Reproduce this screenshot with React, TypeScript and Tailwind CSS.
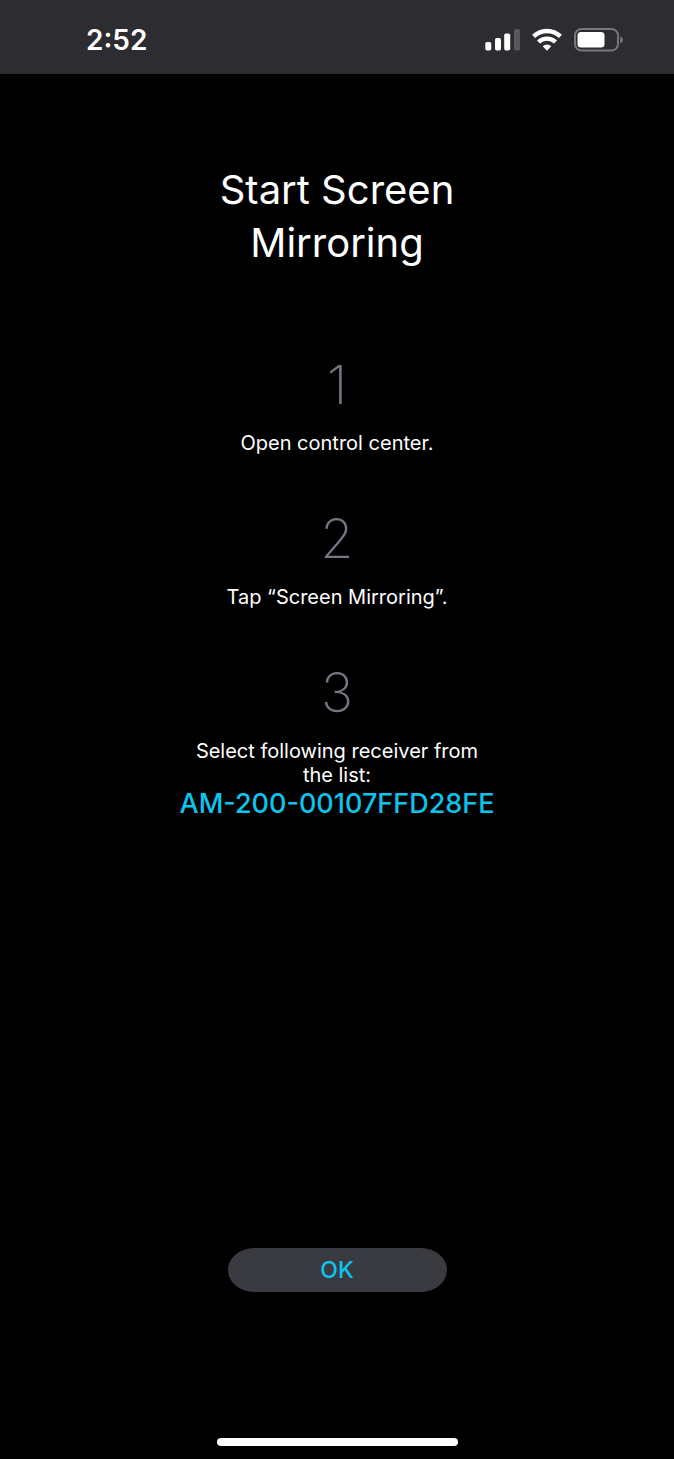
import React from 'react';

interface Step {
  number: number;
  text: string;
  receiver?: string;
}

const steps: Step[] = [
  { number: 1, text: 'Open control center.' },
  { number: 2, text: 'Tap “Screen Mirroring”.' },
  {
    number: 3,
    text: 'Select following receiver from the list:',
    receiver: 'AM-200-00107FFD28FE',
  },
];

function SignalIcon() {
  return (
    <svg width="35" height="24" viewBox="0 0 35 24" fill="white" aria-hidden="true">
      <rect x="0.3" y="14" width="6" height="8.5" rx="1.8" />
      <rect x="10" y="10" width="6" height="12.5" rx="1.8" />
      <rect x="19.2" y="5.5" width="6" height="17" rx="1.8" />
      <rect x="29" y="1" width="6" height="21.5" rx="1.8" fill="#59585d" />
    </svg>
  );
}

function WifiIcon() {
  return (
    <svg width="30" height="24" viewBox="0 0 30 24" fill="none" stroke="white" strokeWidth="4.4" aria-hidden="true">
      <path d="M1.6 8.4a19.2 19.2 0 0 1 26.8 0" />
      <path d="M6.5 14a12.3 12.3 0 0 1 17 0" />
      <path d="M15 22.8l-4.3-4.5a6.2 6.2 0 0 1 8.6 0z" fill="white" stroke="none" />
    </svg>
  );
}

function BatteryIcon() {
  return (
    <svg width="50" height="24" viewBox="0 0 50 24" fill="none" aria-hidden="true">
      <rect x="1" y="1" width="43" height="21.5" rx="6.5" stroke="#78777b" strokeWidth="2" />
      <rect x="3.5" y="4" width="27" height="15.5" rx="3.5" fill="white" />
      <path d="M46.2 8.3c3.6 1.6 3.6 5.6 0 7.2z" fill="#78777b" />
    </svg>
  );
}

function StatusBar() {
  return (
    <header className="flex h-[74px] items-center justify-between bg-[#2d2c31] pr-[50px] pb-[6px] pl-[86px]">
      <time className="pt-[12px] text-[28px] leading-[34px] font-semibold">2:52</time>
      <div className="flex items-center gap-[12px] pt-[12px]">
        <SignalIcon />
        <WifiIcon />
        <BatteryIcon />
      </div>
    </header>
  );
}

export default function App() {
  return (
    <div className="flex min-h-screen flex-col bg-black font-['Inter','Liberation_Sans',sans-serif] text-white">
      <StatusBar />

      <main className="flex flex-1 flex-col items-center px-6 pt-[89px] text-center">
        <h1 className="max-w-[320px] text-[40px] leading-[53px]">Start Screen Mirroring</h1>

        <ol className="mt-[84px] flex flex-col gap-[52px]">
          {steps.map((step) => (
            <li key={step.number} className="flex flex-col items-center">
              <span className="text-[54px] leading-[64px] font-extralight text-[#777684]">{step.number}</span>
              <p className="mt-[14px] max-w-[300px] text-[20px] leading-[24px]">{step.text}</p>
              {step.receiver && (
                <strong className="mt-px text-[27px] leading-[32px] font-medium text-[#0cc4ec]">
                  {step.receiver}
                </strong>
              )}
            </li>
          ))}
        </ol>

        <button
          type="button"
          className="mt-auto h-[44px] w-[219px] rounded-[26px/22px] bg-[#3a3a41] text-[23px] leading-[28px] font-medium text-[#0cc4ec]"
        >
          OK
        </button>
      </main>

      {/* Home indicator */}
      <footer className="flex justify-center pt-[146px] pb-[13px]">
        <div className="h-[8px] w-[241px] rounded-full bg-white" />
      </footer>
    </div>
  );
}
